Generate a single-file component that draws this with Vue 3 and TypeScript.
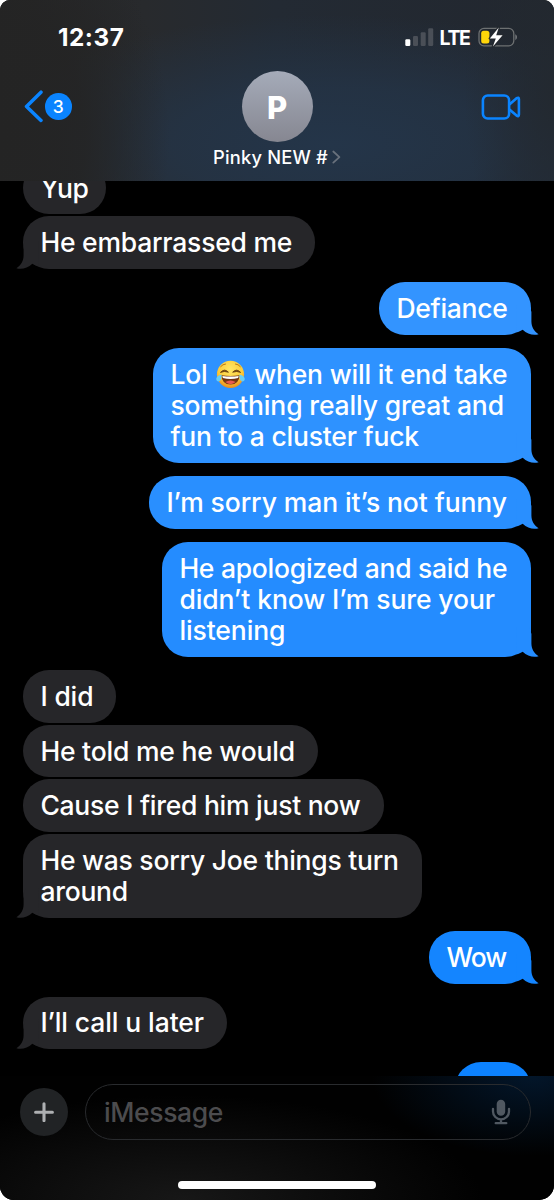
<script setup lang="ts">
interface Line {
  text: string
  width: number
  after?: string
}
interface Message {
  side: 'in' | 'out'
  width: number
  lines: Line[]
  tail?: boolean
  color?: string
}

const messages: Message[] = [
  { side: 'in', width: 82.5, lines: [{ text: 'Yup', width: 47.7 }] },
  { side: 'in', width: 292, tail: true, lines: [{ text: 'He embarrassed me', width: 251.8 }] },
  { side: 'out', width: 152, tail: true, color: '#3394ff', lines: [{ text: 'Defiance', width: 111.2 }] },
  {
    side: 'out', width: 378, tail: true, color: '#2e92ff',
    lines: [
      { text: 'Lol ', after: ' when will it end take', width: 337 },
      { text: 'something really great and', width: 333.5 },
      { text: 'fun to a cluster fuck', width: 248.5 },
    ],
  },
  { side: 'out', width: 382, tail: true, color: '#298fff', lines: [{ text: 'I’m sorry man it’s not funny', width: 340.5 }] },
  {
    side: 'out', width: 369, tail: true, color: '#248cff',
    lines: [
      { text: 'He apologized and said he', width: 327.8 },
      { text: 'didn’t know I’m sure your', width: 315.5 },
      { text: 'listening', width: 106 },
    ],
  },
  { side: 'in', width: 93.3, lines: [{ text: 'I did', width: 53 }] },
  { side: 'in', width: 295, lines: [{ text: 'He told me he would', width: 254.4 }] },
  { side: 'in', width: 361.3, lines: [{ text: 'Cause I fired him just now', width: 320 }] },
  {
    side: 'in', width: 399, tail: true,
    lines: [
      { text: 'He was sorry Joe things turn', width: 358.4 },
      { text: 'around', width: 87.5 },
    ],
  },
  { side: 'out', width: 102, tail: true, color: '#1485ff', lines: [{ text: 'Wow', width: 60 }] },
  { side: 'in', width: 204.3, tail: true, lines: [{ text: 'I’ll call u later', width: 163.5 }] },
  { side: 'out', width: 76, color: '#0c82ff', lines: [] },
]

const endsGroup = (i: number) => messages[i + 1]?.side !== messages[i].side || !!messages[i].tail

// Tracks each line out or in so that it fills its measured advance.
const vFit = {
  mounted(el: HTMLElement, binding: { value: number }) {
    const natural = el.getBoundingClientRect().width
    const count = (el.textContent ?? '').length || 1
    el.style.letterSpacing = `${(binding.value - natural) / count}px`
  },
}
</script>

<template>
  <div class="phone">
    <header class="top">
      <div class="status">
        <span v-fit="66.3" class="clock">12:37</span>
        <div class="indicators">
          <svg class="signal" width="29" height="19" viewBox="0 0 29 19">
            <rect x="0.3" y="11.3" width="5" height="6.7" rx="1.2" fill="#fff" />
            <rect x="8" y="8" width="5" height="10" rx="1.2" fill="#4a4f57" />
            <rect x="15.7" y="4.3" width="5" height="13.7" rx="1.2" fill="#4a4f57" />
            <rect x="23.2" y="0.3" width="5" height="17.7" rx="1.2" fill="#4a4f57" />
          </svg>
          <span v-fit="30" class="lte">LTE</span>
          <svg class="battery" width="40" height="22" viewBox="0 0 40 22">
            <rect x="1" y="2.4" width="34.8" height="17.4" rx="5" fill="none" stroke="#6d7071" stroke-width="1.3" />
            <path d="M37.3 8.3c2.2 1 2.2 4.8 0 5.8z" fill="#777a7c" />
            <rect x="3.2" y="4.7" width="8.2" height="12.9" rx="2.5" fill="#ffd60a" />
            <path d="M20.8 1.5 11.8 12.4h6l-2.9 8.2 9.7-11.4h-6.4z" fill="#fff" stroke="#24292f" stroke-width="2.4" paint-order="stroke" stroke-linejoin="round" />
          </svg>
        </div>
      </div>
      <div class="nav">
        <div class="back">
          <svg width="20" height="33" viewBox="0 0 20 33"><path d="M17 2.2 2.5 16.5 17 30.4" fill="none" stroke="#0a84ff" stroke-width="3.5" stroke-linecap="round" stroke-linejoin="round" /></svg>
          <span class="count">3</span>
        </div>
        <div class="contact">
          <div class="avatar">P</div>
          <div class="name">
            <span v-fit="115">Pinky NEW #</span>
            <svg width="9" height="14" viewBox="0 0 9 14"><path d="m1.3 1.5 6.1 5.6-6.1 5.5" fill="none" stroke="#69717c" stroke-width="1.8" stroke-linecap="round" stroke-linejoin="round" /></svg>
          </div>
        </div>
        <svg class="video" width="40" height="28" viewBox="0 0 40 28">
          <g fill="none" stroke="#0a84ff" stroke-width="2.6" stroke-linejoin="round">
            <rect x="1.9" y="2.5" width="26.2" height="23" rx="4.8" />
            <path d="M28.4 11.4 35.6 5.2Q37.9 3.8 37.9 6.2v15.3q0 2.6-2.3 1.1l-7.2-6.2" />
          </g>
        </svg>
      </div>
    </header>

    <main class="thread">
      <div
        v-for="(m, i) in messages"
        :key="i"
        class="bubble"
        :class="[m.side, { spaced: endsGroup(i) }]"
        :style="{ width: m.width + 'px', backgroundColor: m.color, color: m.color }"
      >
        <div v-for="line in m.lines" :key="line.text" class="line">
          <span v-fit="line.width" class="text">{{ line.text }}<template v-if="line.after"><svg class="joy" width="29" height="29" viewBox="0 0 29 29">
            <defs>
              <radialGradient id="face" cx="50%" cy="32%" r="68%">
                <stop offset="0" stop-color="#ffe866" />
                <stop offset="0.65" stop-color="#fccb38" />
                <stop offset="1" stop-color="#e98b1d" />
              </radialGradient>
            </defs>
            <circle cx="14.5" cy="14.3" r="13.6" fill="url(#face)" />
            <path d="M4.7 6.6q2.1-2.5 4.8-2.6M24.3 6.6Q22.2 4.1 19.5 4" fill="none" stroke="#b87518" stroke-width="1" stroke-linecap="round" />
            <path d="M4.5 12.4q4.1-4.4 7.9-.2-4.1-1.6-7.9.2M16.7 12.2q3.9-4.2 7.9.2-3.8-1.8-7.9-.2" fill="#69400f" stroke="#69400f" stroke-width="0.9" stroke-linejoin="round" />
            <path d="M5.4 15.2q9.1 1.6 18.2 0-.5 9.3-9.1 9.3t-9.1-9.3" fill="#743611" />
            <path d="M6.3 15.9q8.2 1.3 16.4 0l-.6 2.2q-7.6 1.8-15.2 0z" fill="#fff" />
            <path d="M9.3 22.1q5.2-3.4 10.4 0-5.2 4.1-10.4 0" fill="#e95a4f" />
            <path d="M5.5 14.4Q.9 15.5.3 18.4c-.4 2.4 2 4 3.8 2.3 1.4-1.3 1.5-3.8 1.4-6.3M23.5 14.4q4.6 1.1 5.2 4c.4 2.4-2 4-3.8 2.3-1.4-1.3-1.5-3.8-1.4-6.3" fill="#67cef5" />
          </svg>{{ line.after }}</template></span>
        </div>
        <svg v-if="m.tail" class="tail" width="23" height="30" viewBox="0 0 23 30">
          <path d="M1 0H13.5L15.4 7V16.2C15.4 21.8 18 26 22.6 29.2 17.5 30.6 11.3 29.3 6.7 24.7Q4 26.4.5 27.4z" fill="currentColor" />
        </svg>
      </div>
    </main>

    <footer class="composer">
      <div class="plus">
        <svg width="20" height="20" viewBox="0 0 20 20"><path d="M10 1.8v16.8M1.6 10.2h16.8" stroke="#aeb0b2" stroke-width="3.1" stroke-linecap="round" /></svg>
      </div>
      <div class="field">
        <span v-fit="119" class="placeholder">iMessage</span>
        <svg width="20" height="26" viewBox="0 0 20 26">
          <rect x="5.7" y="0.7" width="8.5" height="16" rx="4.25" fill="#505861" />
          <path d="M2 9.8v2.6a8 8 0 0 0 16 0V9.8M10 20.4v3.5M4.7 24.2h10.6" fill="none" stroke="#505861" stroke-width="2.3" stroke-linecap="round" />
        </svg>
      </div>
      <div class="home"></div>
    </footer>
  </div>
</template>

<style>
body {
  background: #fff;
}
</style>

<style scoped>
.phone {
  width: 554px;
  height: 1200px;
  display: flex;
  flex-direction: column;
  overflow: hidden;
  background: #000;
  border-radius: 10px 11px 15px 14px;
  font-family: Inter, 'Liberation Sans', sans-serif;
  color: #fff;
}
.top {
  height: 181px;
  flex: none;
  background:
    radial-gradient(ellipse 170px 230px at 0 75%, #242424 0, #242424dd 50%, #24242400 100%),
    radial-gradient(ellipse 90px 190px at 100% 50%, #232930 0, #23293000 100%),
    radial-gradient(ellipse 360px 130px at 60% 80%, #243549 0, #243549bb 45%, #24354900 100%),
    linear-gradient(90deg, #252525 0, #282a2d 26%, #232a33 50%, #22272f 100%);
}
.status {
  height: 71px;
  box-sizing: border-box;
  padding: 23px 36.5px 0 58px;
  display: flex;
  justify-content: space-between;
}
.clock {
  height: 29px;
  font-size: 24.3px;
  font-weight: 700;
  line-height: 29px;
  white-space: nowrap;
}
.indicators {
  display: flex;
  height: 28px;
  align-items: center;
}
.lte {
  font-size: 19.5px;
  font-weight: 700;
  margin: 1px 8px 0 6px;
}
.nav {
  display: grid;
  grid-template-columns: 1fr 150px 1fr;
  height: 110px;
}
.back {
  display: flex;
  align-items: center;
  height: 71px;
  padding-left: 24px;
}
.count {
  width: 26.5px;
  height: 26.5px;
  margin-left: 1px;
  border-radius: 50%;
  background: #0a84ff;
  font-size: 17.5px;
  font-weight: 500;
  line-height: 27px;
  text-align: center;
}
.contact {
  display: flex;
  flex-direction: column;
  align-items: center;
}
.avatar {
  width: 71px;
  height: 71px;
  border-radius: 50%;
  background: linear-gradient(#a5abb9, #868791);
  font-size: 31px;
  font-weight: 800;
  line-height: 73px;
  text-align: center;
}
.name {
  display: flex;
  align-items: center;
  gap: 4px;
  margin-top: 3.5px;
  height: 23px;
  font-size: 18.3px;
  font-weight: 550;
  line-height: 23px;
  white-space: nowrap;
}
.video {
  justify-self: end;
  margin: 22px 33.5px 0 0;
}
.thread {
  height: 895px;
  flex: none;
  overflow: hidden;
  display: flex;
  flex-direction: column;
}
.bubble {
  position: relative;
  flex: none;
  box-sizing: border-box;
  min-height: 52.7px;
  padding: 10.9px 0 10.5px 17.4px;
  border-radius: 26px;
  margin-bottom: 1.8px;
}
.bubble:first-child {
  margin-top: -19.3px;
}
.bubble.spaced {
  margin-bottom: 13.1px;
}
.bubble.in {
  align-self: flex-start;
  margin-left: 23px;
  background: #262629;
  color: #262629;
}
.bubble.out {
  align-self: flex-end;
  margin-right: 23px;
}
.line {
  height: 31.3px;
  line-height: 31.3px;
  font-size: 26.5px;
  font-weight: 550;
  white-space: pre;
  color: #fff;
}
.text {
  display: inline-block;
}
.joy {
  margin: 0 2px 0 2px;
  vertical-align: -5px;
}
.tail {
  position: absolute;
  right: -7.5px;
  bottom: 0;
}
.in .tail {
  right: auto;
  left: -7.5px;
  transform: scaleX(-1);
}
.composer {
  height: 124px;
  flex: none;
  box-sizing: border-box;
  padding: 8px 23px 0 20px;
  display: grid;
  grid-template-columns: 48px 446px;
  grid-template-rows: 56px 1fr;
  column-gap: 17px;
  background:
    radial-gradient(ellipse 160px 80px at 96% 0, #03162a 0, #03162a00 100%),
    radial-gradient(ellipse 300px 105px at 33% 100%, #171717 0, #17171700 100%),
    #010101;
}
.plus {
  width: 48px;
  height: 48px;
  margin-top: 4px;
  border-radius: 50%;
  background: #212325;
  display: flex;
  align-items: center;
  justify-content: center;
}
.field {
  box-sizing: border-box;
  height: 56px;
  border: 1.5px solid #292b2e;
  border-radius: 28px;
  padding: 0 19px 0 18px;
  display: flex;
  align-items: center;
  justify-content: space-between;
}
.placeholder {
  font-size: 26.5px;
  font-weight: 530;
  color: #4c4c4e;
}
.home {
  grid-column: 1 / -1;
  justify-self: start;
  width: 198px;
  height: 8px;
  margin: 41px 0 0 158px;
  border-radius: 4px;
  background: #fff;
}
</style>
